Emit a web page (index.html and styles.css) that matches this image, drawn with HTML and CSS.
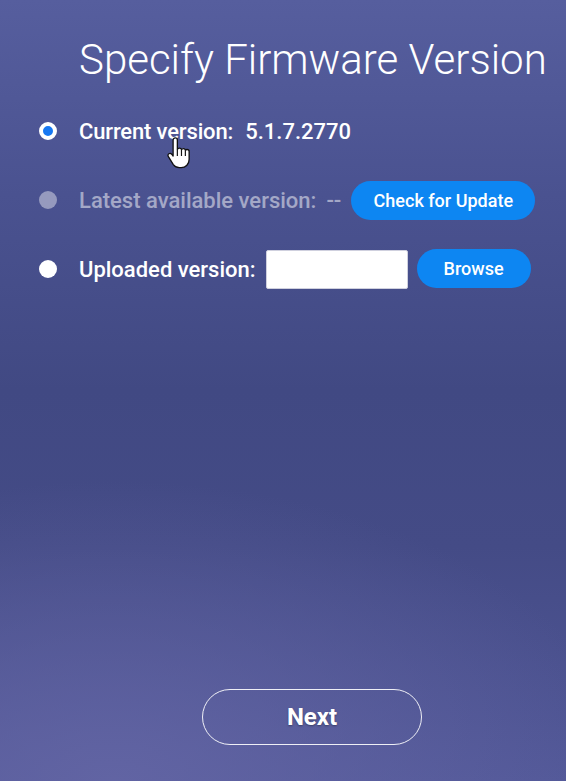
FILE: index.html
```html
<!DOCTYPE html>
<html>
<head>
<meta charset="utf-8">
<link rel="stylesheet" href="styles.css">
</head>
<body>
<div class="page">
  <h1 class="title">Specify Firmware Version</h1>
  <div class="options">
    <div class="row row-current">
      <span class="radio radio-checked"></span>
      <span class="label">Current version:</span>
      <span class="value">5.1.7.2770</span>
    </div>
    <div class="row row-disabled">
      <span class="radio radio-disabled"></span>
      <span class="label">Latest available version:</span>
      <span class="value">--</span>
      <button class="pill btn-check">Check for Update</button>
    </div>
    <div class="row">
      <span class="radio"></span>
      <span class="label">Uploaded version:</span>
      <input class="file-input" type="text">
      <button class="pill btn-browse">Browse</button>
    </div>
  </div>
  <div class="footer">
    <button class="next">Next</button>
  </div>
  <svg class="cursor" width="26" height="33" viewBox="0 0 22 28">
    <path d="M6 2.5c0-1.1.9-1.8 1.8-1.8S9.6 1.4 9.6 2.5v8.2c.3-.8 1-1.3 1.8-1.3.9 0 1.6.6 1.7 1.4.3-.6.9-1 1.6-1 .9 0 1.6.6 1.700 1.5.3-.4.8-.7 1.4-.7 1 0 1.8.8 1.8 1.8v6.4c0 4.1-2.8 7.2-6.8 7.2h-1.6c-2.4 0-3.8-1-5-2.6L2 16.6c-.6-.8-.4-1.9.4-2.4.8-.5 1.8-.3 2.4.4L6 16.2z" fill="#fff" stroke="#111" stroke-width="1.1" stroke-linejoin="round"/>
    <path d="M9.6 10.8v5.4M13.1 11v5.2M16.4 11.8v4.4" stroke="#111" stroke-width="1" fill="none"/>
  </svg>
</div>
</body>
</html>
```

FILE: styles.css
```css
html, body {
  margin: 0;
  padding: 0;
}
body {
  width: 566px;
  height: 781px;
  overflow: hidden;
  font-family: Roboto, "Liberation Sans", sans-serif;
  color: #fff;
  background:
    radial-gradient(ellipse 520px 300px at 20% 100%, rgba(100, 102, 165, 0.85), rgba(100, 102, 165, 0) 100%),
    linear-gradient(180deg, #565e9e 0%, #4a5290 25%, #414983 50%, #444b86 70%, #525898 100%);
}
.page {
  position: relative;
  height: 781px;
  display: flex;
  flex-direction: column;
}
.title {
  margin: 35px 0 0 79px;
  font-weight: 300;
  font-size: 42px;
  line-height: 50px;
  white-space: nowrap;
}
.options {
  margin-top: 26px;
  display: flex;
  flex-direction: column;
  gap: 29px;
}
.row {
  display: flex;
  align-items: center;
  height: 40px;
  padding-left: 39px;
  font-size: 22px;
  font-weight: 500;
}
.radio {
  width: 18px;
  height: 18px;
  border-radius: 50%;
  background: #fff;
  box-sizing: border-box;
  flex: none;
  margin-right: 22px;
}
.radio-checked {
  border: 4px solid #fff;
  background: #1778f2;
}
.radio-disabled {
  background: rgba(255, 255, 255, 0.42);
}
.row-disabled .label,
.row-disabled .value {
  color: rgba(255, 255, 255, 0.5);
}
.row-current .label {
  letter-spacing: -0.15px;
}
.value {
  margin-left: 12px;
}
.row-disabled .value {
  margin-left: 10px;
}
.pill {
  font-family: Roboto, "Liberation Sans", sans-serif;
  font-size: 18px;
  font-weight: 500;
  color: #fff;
  background: #0d86f2;
  border: none;
  border-radius: 20px;
  height: 39px;
  padding: 0;
}
.btn-check {
  margin-left: 10px;
  width: 184px;
}
.file-input {
  margin-left: 10px;
  width: 142px;
  height: 39px;
  box-sizing: border-box;
  border: 1px solid #cfd0de;
  border-radius: 2px;
  background: #fff;
  padding: 0;
}
.btn-browse {
  margin-left: 9px;
  width: 114px;
  position: relative;
  top: -1px;
}
.footer {
  margin-top: auto;
  margin-bottom: 36px;
  padding-left: 79px;
  width: 466px;
  display: flex;
  justify-content: center;
}
.next {
  width: 220px;
  height: 56px;
  border: 1px solid rgba(255, 255, 255, 0.9);
  border-radius: 28px;
  background: transparent;
  color: #fff;
  font-family: Roboto, "Liberation Sans", sans-serif;
  font-size: 24px;
  font-weight: 700;
  text-shadow: 0 1px 2px rgba(0, 0, 0, 0.35);
}
.cursor {
  position: absolute;
  left: 166px;
  top: 137px;
}
```
